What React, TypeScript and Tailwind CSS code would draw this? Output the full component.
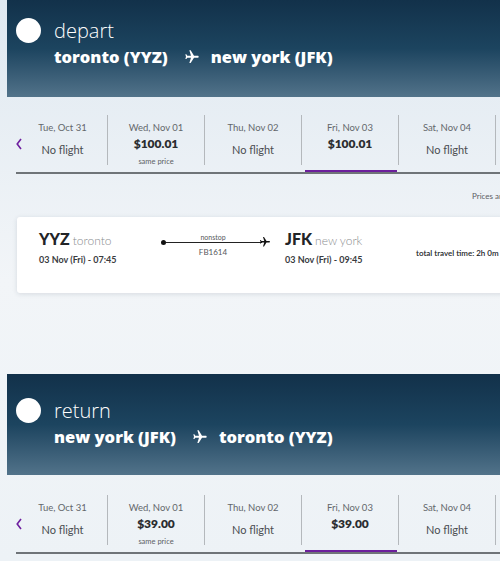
import { MdFlight } from "react-icons/md";

type Day = {
  label: string;
  price?: string;
  same?: boolean;
  selected?: boolean;
};

const DEPART_DAYS: Day[] = [
  { label: "Tue, Oct 31" },
  { label: "Wed, Nov 01", price: "$100.01", same: true },
  { label: "Thu, Nov 02" },
  { label: "Fri, Nov 03", price: "$100.01", selected: true },
  { label: "Sat, Nov 04" },
  { label: "Sun, Nov 05" },
];

const RETURN_DAYS: Day[] = [
  { label: "Tue, Oct 31" },
  { label: "Wed, Nov 01", price: "$39.00", same: true },
  { label: "Thu, Nov 02" },
  { label: "Fri, Nov 03", price: "$39.00", selected: true },
  { label: "Sat, Nov 04" },
  { label: "Sun, Nov 05" },
];

function LegHeader({
  title,
  from,
  to,
  tall,
}: {
  title: string;
  from: string;
  to: string;
  tall?: boolean;
}) {
  return (
    <div
      className={`ml-[7px] pl-[9px] bg-gradient-to-b from-[#12314a] via-[#1c445f] to-[#52738a] font-['Open_Sans',sans-serif] ${
        tall ? "h-[101px] pt-[24px]" : "h-[97px] pt-[18px]"
      }`}
    >
      <div className="flex items-center gap-[13px]">
        <div className="w-[25px] h-[25px] rounded-full bg-white" />
        <span className="text-[20px] font-light leading-[25px] text-white">
          {title}
        </span>
      </div>
      <div className="ml-[38px] mt-[5px] flex items-center text-[16.5px] font-extrabold leading-[18px] text-white">
        <span>{from}</span>
        <MdFlight className="rotate-90 ml-[16px] mr-[11px]" size={16} />
        <span>{to}</span>
      </div>
    </div>
  );
}

function DayStrip({ days, top }: { days: Day[]; top: string }) {
  return (
    <div className={`ml-[16px] ${top}`}>
      <div className="flex">
        <div className="w-[6px] shrink-0 pt-[23px]">
          <svg width="6" height="12" viewBox="0 0 6 12">
            <path
              d="M5 1 L1.2 6 L5 11"
              stroke="#6e1f9f"
              strokeWidth="1.6"
              fill="none"
            />
          </svg>
        </div>
        {days.map((d, i) => (
          <div
            key={d.label}
            className={`${i === 0 ? "w-[86px]" : "w-[97px]"} shrink-0 flex flex-col`}
          >
            <div
              className={`h-[50px] border-r border-[#b4b8bc] flex flex-col items-center pt-[6px] ${
                i === 0 ? "pr-[4px]" : ""
              }`}
            >
              <span className="text-[9.5px] leading-[14px] text-[#63676b] whitespace-nowrap">
                {d.label}
              </span>
              {d.price ? (
                <>
                  <span className="mt-[1px] text-[12px] font-extrabold leading-[16px] text-[#2b2d30]">
                    {d.price}
                  </span>
                  {d.same && (
                    <span className="mt-[5px] text-[7.5px] leading-[10px] text-[#5c6064]">
                      same price
                    </span>
                  )}
                </>
              ) : (
                <span className="mt-[7px] text-[11px] leading-[16px] text-[#4a4d51]">
                  No flight
                </span>
              )}
            </div>
            <div className="h-[5px]" />
            <div
              className={`h-[2px] ml-[3px] mr-[2px] ${
                d.selected ? "bg-[#6c1f9c]" : ""
              }`}
            />
          </div>
        ))}
      </div>
      <div className="h-[2px] bg-[#6f7478]" />
    </div>
  );
}

function FlightCard() {
  return (
    <div className="ml-[17px] mt-[16px] w-[520px] h-[76px] bg-white rounded-[3px] shadow-[0_1px_5px_rgba(40,60,80,0.14)] flex items-start pl-[22px]">
      {/* origin */}
      <div className="w-[124px] pt-[12px]">
        <div className="flex items-baseline gap-[3px] whitespace-nowrap">
          <span className="text-[16px] font-black leading-[20px] text-[#222427]">
            YYZ
          </span>
          <span className="text-[12px] font-light text-[#8a8d90]">toronto</span>
        </div>
        <div className="mt-[3px] text-[9px] font-bold leading-[13px] text-[#3a3c3f] whitespace-nowrap">
          03 Nov (Fri) - 07:45
        </div>
      </div>

      {/* connector */}
      <div className="w-[112px] pt-[16px] flex flex-col">
        <div className="w-[100px] text-center text-[7px] leading-[8px] text-[#55585b]">
          nonstop
        </div>
        <div className="flex items-center h-[2px]">
          <div className="w-[5px] h-[5px] rounded-full bg-[#111] -ml-[2px] shrink-0" />
          <div className="flex-1 h-[1px] bg-[#222]" />
          <MdFlight className="rotate-90 -ml-[3px] mr-[4px] text-[#111] shrink-0" size={12} />
        </div>
        <div className="mt-[3px] w-[100px] text-center text-[8px] leading-[12px] text-[#55585b]">
          FB1614
        </div>
      </div>

      {/* destination */}
      <div className="ml-[10px] w-[131px] pt-[12px]">
        <div className="flex items-baseline gap-[3px] whitespace-nowrap">
          <span className="text-[16px] font-black leading-[20px] text-[#222427]">
            JFK
          </span>
          <span className="text-[12px] font-light text-[#8a8d90]">new york</span>
        </div>
        <div className="mt-[3px] text-[9px] font-bold leading-[13px] text-[#3a3c3f] whitespace-nowrap">
          03 Nov (Fri) - 09:45
        </div>
      </div>

      <div className="pt-[31px] text-[8px] font-semibold leading-[10px] text-[#222427] whitespace-nowrap">
        total travel time: 2h 0m
      </div>
    </div>
  );
}

export default function App() {
  return (
    <div className="w-[500px] h-[561px] overflow-hidden font-['Lato',sans-serif] bg-gradient-to-b from-[#e0e9f1] via-[#f2f5f8] to-[#edf2f6]">
      <LegHeader title="depart" from="toronto (YYZ)" to="new york (JFK)" />
      <DayStrip days={DEPART_DAYS} top="mt-[18px]" />
      <div className="mt-[17px] ml-[472px] text-[8px] leading-[10px] text-[#5c6064] whitespace-nowrap">
        Prices are in CAD
      </div>
      <FlightCard />
      <div className="mt-[81px]">
        <LegHeader
          title="return"
          from="new york (JFK)"
          to="toronto (YYZ)"
          tall
        />
      </div>
      <DayStrip days={RETURN_DAYS} top="mt-[20px]" />
    </div>
  );
}
